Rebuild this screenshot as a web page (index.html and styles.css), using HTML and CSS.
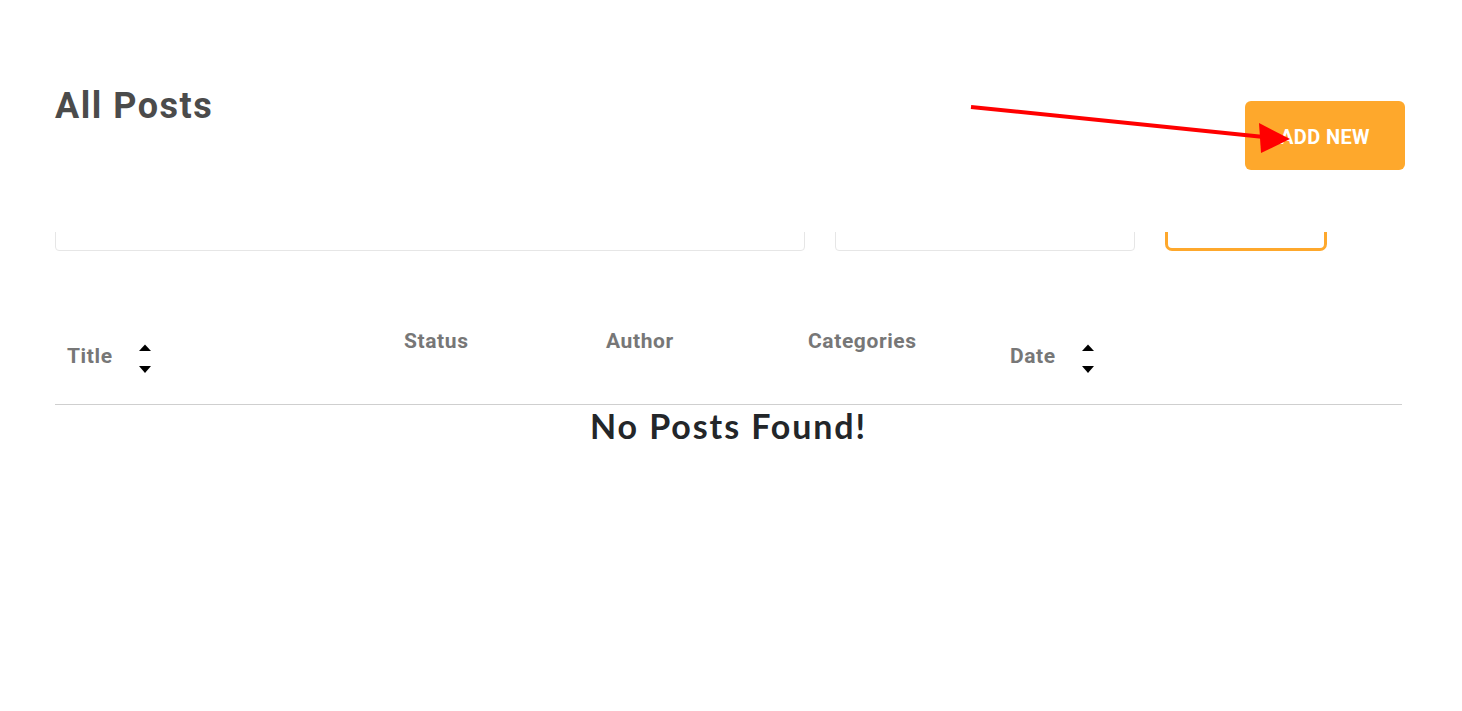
FILE: index.html
```html
<!DOCTYPE html>
<html lang="en">
<head>
    <meta charset="UTF-8">
    <meta name="viewport" content="width=device-width, initial-scale=1.0">
    <title>All Posts</title>
    <link rel="stylesheet" href="styles.css">
</head>
<body>
    <div class="container">
        <div class="page-header">
            <h1>All Posts</h1>
            <a href="#" class="btn add-btn">ADD NEW</a>
        </div>

        <div class="filters">
            <div class="filter-input search-input"></div>
            <div class="filter-input select-input"></div>
            <div class="filter-btn"></div>
        </div>

        <div class="table">
            <div class="thead">
                <div class="th th-title sortable">
                    <span class="th-label">Title</span>
                    <svg class="sort-icon" width="14" height="30" viewBox="0 0 14 30">
                        <path d="M1 7 L7 0.5 L13 7 Z" fill="#000"/>
                        <path d="M1 22 L7 29 L13 22 Z" fill="#000"/>
                    </svg>
                </div>
                <div class="th">Status</div>
                <div class="th">Author</div>
                <div class="th">Categories</div>
                <div class="th th-date sortable">
                    <span class="th-label">Date</span>
                    <svg class="sort-icon" width="14" height="30" viewBox="0 0 14 30">
                        <path d="M1 7 L7 0.5 L13 7 Z" fill="#000"/>
                        <path d="M1 22 L7 29 L13 22 Z" fill="#000"/>
                    </svg>
                </div>
            </div>
            <div class="empty">No Posts Found!</div>
        </div>
    </div>

    <svg class="annotation" width="1462" height="711" viewBox="0 0 1462 711">
        <line x1="971" y1="107" x2="1264" y2="137" stroke="#ff0000" stroke-width="4"/>
        <polygon points="1259,123 1290,139 1261,153" fill="#ff0000"/>
    </svg>
</body>
</html>
```

FILE: styles.css
```css
* {
    margin: 0;
    padding: 0;
    box-sizing: border-box;
}

body {
    background: #fff;
    font-family: 'Roboto', 'Liberation Sans', sans-serif;
}

.container {
    width: 1347px;
    margin-left: 55px;
    padding-top: 82px;
}

.page-header {
    display: flex;
    justify-content: space-between;
    align-items: flex-start;
}

h1 {
    font-size: 36px;
    font-weight: 700;
    line-height: 48px;
    color: #4b4b4b;
    letter-spacing: 1.5px;
}

.btn {
    display: flex;
    align-items: center;
    justify-content: center;
    text-decoration: none;
    cursor: pointer;
}

.add-btn {
    width: 160px;
    height: 69px;
    margin-top: 19px;
    margin-right: -3px;
    background: #fea82c;
    color: #fff;
    border-radius: 6px;
    font-size: 20px;
    font-weight: 700;
    letter-spacing: 0.4px;
    padding-top: 2px;
}

.filters {
    display: flex;
    gap: 30px;
    height: 19px;
    margin-top: 62px;
    overflow: hidden;
    align-items: flex-end;
}

.filter-input {
    height: 44px;
    flex-shrink: 0;
    border: 1px solid #e6e6e6;
    border-radius: 4px;
}

.search-input {
    width: 750px;
}

.select-input {
    width: 300px;
}

.filter-btn {
    width: 162px;
    height: 44px;
    flex-shrink: 0;
    border: 3px solid #fea82c;
    border-radius: 7px;
}

.table {
    margin-top: 58px;
}

.thead {
    display: flex;
    align-items: flex-start;
    border-bottom: 1px solid #cfcfcf;
}

.th {
    width: 202px;
    padding: 20px 12px;
    font-size: 21px;
    font-weight: 700;
    line-height: 24px;
    letter-spacing: 0.6px;
    color: #777;
}

.th-title {
    width: 337px;
}

.th-date {
    flex: 1;
}

.sortable {
    display: flex;
    align-items: center;
    gap: 12px;
    padding-top: 35px;
    padding-bottom: 30px;
}

.th-label {
    min-width: 59px;
    margin-top: -6px;
}

.sort-icon {
    display: block;
}

.empty {
    text-align: center;
    font-family: 'Lato', 'Liberation Sans', sans-serif;
    font-size: 34px;
    font-weight: 700;
    line-height: 44px;
    letter-spacing: 1.9px;
    color: #232629;
    margin-top: -1px;
}

.annotation {
    position: absolute;
    top: 0;
    left: 0;
    pointer-events: none;
}
```
